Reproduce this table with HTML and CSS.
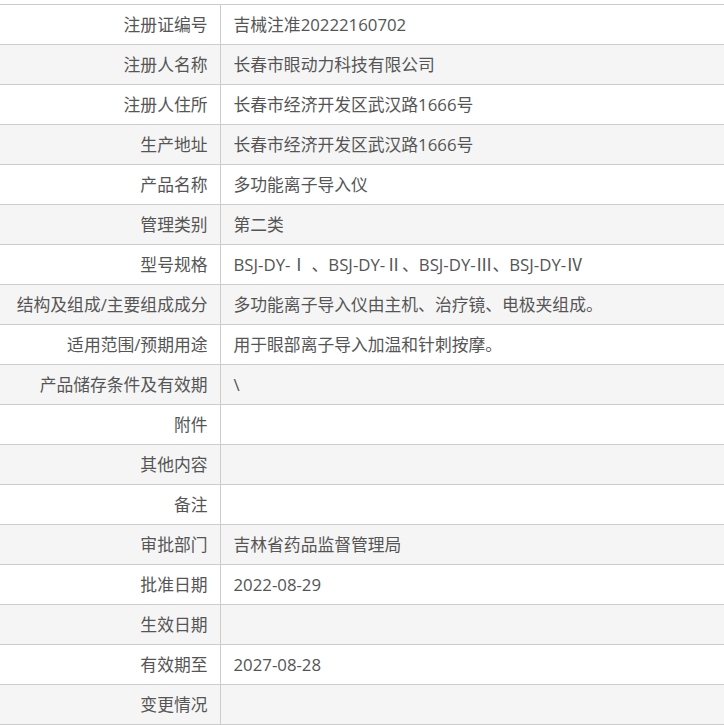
FILE: index.html
```html
<!DOCTYPE html>
<html lang="zh">
<head>
<meta charset="utf-8">
<link rel="stylesheet" href="styles.css">
</head>
<body>
<table class="info">
<tbody>
<tr><th>注册证编号</th><td>吉械注准20222160702</td></tr>
<tr><th>注册人名称</th><td>长春市眼动力科技有限公司</td></tr>
<tr><th>注册人住所</th><td>长春市经济开发区武汉路1666号</td></tr>
<tr><th>生产地址</th><td>长春市经济开发区武汉路1666号</td></tr>
<tr><th>产品名称</th><td>多功能离子导入仪</td></tr>
<tr><th>管理类别</th><td>第二类</td></tr>
<tr><th>型号规格</th><td>BSJ-DY-Ⅰ 、BSJ-DY-Ⅱ、BSJ-DY-Ⅲ、BSJ-DY-Ⅳ</td></tr>
<tr><th>结构及组成/主要组成成分</th><td>多功能离子导入仪由主机、治疗镜、电极夹组成。</td></tr>
<tr><th>适用范围/预期用途</th><td>用于眼部离子导入加温和针刺按摩。</td></tr>
<tr><th>产品储存条件及有效期</th><td>\</td></tr>
<tr><th>附件</th><td></td></tr>
<tr><th>其他内容</th><td></td></tr>
<tr><th>备注</th><td></td></tr>
<tr><th>审批部门</th><td>吉林省药品监督管理局</td></tr>
<tr><th>批准日期</th><td>2022-08-29</td></tr>
<tr><th>生效日期</th><td></td></tr>
<tr><th>有效期至</th><td>2027-08-28</td></tr>
<tr><th>变更情况</th><td></td></tr>
</tbody>
</table>
</body>
</html>
```

FILE: styles.css
```css
html, body {
  margin: 0;
  padding: 0;
  background: #fff;
}
body {
  padding-top: 4px;
  font-family: "Open Sans", "Noto Sans CJK SC", sans-serif;
  font-size: 16.8px;
  color: #555;
}
.info {
  width: 100%;
  border-collapse: collapse;
  table-layout: fixed;
}
.info tr {
  height: 40px;
}
.info tr:nth-child(even) {
  background: #f5f5f5;
}
.info th,
.info td {
  border-top: 1px solid #cccccc;
  border-bottom: 1px solid #cccccc;
  padding: 0;
  height: 39px;
  box-sizing: border-box;
  font-weight: normal;
  white-space: nowrap;
  line-height: 20px;
}
.info th {
  width: 220px;
  text-align: right;
  padding-right: 12px;
  border-right: 1px solid #cccccc;
}
.info td {
  text-align: left;
  padding-left: 13px;
}
```
